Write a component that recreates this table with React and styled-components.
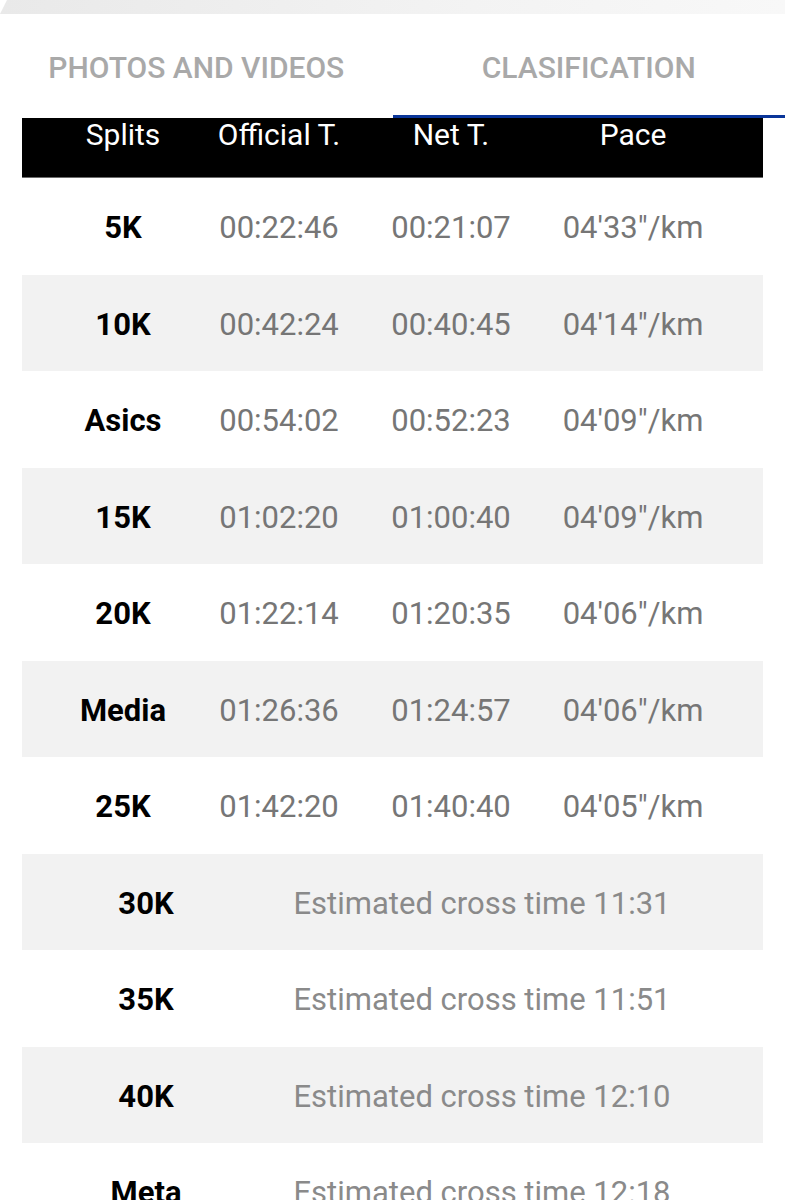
import React from 'react';
import styled, { createGlobalStyle } from 'styled-components';

const GlobalStyle = createGlobalStyle`
    body {
        margin: 0;
        background: #fff;
        font-family: Roboto, "Liberation Sans", sans-serif;
    }
`;

const Page = styled.div`
    width: 785px;
    height: 1200px;
    overflow: hidden;`
;

const TopStrip = styled.div`
    height: 14px;
    background: linear-gradient(90deg, #e9e9e9 0%, #f3f3f3 60%, #f8f8f8 100%);
    clip-path: polygon(7px 0, 100% 0, 100% 100%, 0 100%);`
;

const Tabs = styled.div`
    display: grid;
    grid-template-columns: 1fr 1fr;
    height: 104px;`
;

const Tab = styled.div`
    display: flex;
    align-items: center;
    justify-content: center;
    padding-top: 6px;
    font-size: 30px;
    font-weight: 500;
    text-transform: uppercase;
    color: #a9a9a9;
    border-bottom: 3px solid ${p => (p.active ? '#0a3599' : 'transparent')};`
;

const Table = styled.div`
    margin: 0 22px;`
;

const cols = '202px 110px 234px 130px 1fr';

const HeaderRow = styled.div`
    display: grid;
    grid-template-columns: ${cols};
    height: 59px;
    background: #000;
    border-bottom: 1px solid #6b6b6b;`
;

const HeaderCell = styled.div`
    display: flex;
    justify-content: center;
    white-space: nowrap;
    color: #fff;
    font-size: 30px;
    line-height: 34px;`
;

const Row = styled.div`
    display: grid;
    grid-template-columns: ${p => (p.estimated ? '248px 424px 1fr' : cols)};
    align-items: center;
    height: 96.5px;
    padding-top: 3px;
    box-sizing: border-box;
    background: ${p => (p.shaded ? '#f2f2f2' : '#fff')};`
;

const Cell = styled.div`
    display: flex;
    justify-content: center;
    white-space: nowrap;
    font-size: 31px;
    color: #767676;`
;

const Label = styled(Cell)`
    color: #000;
    font-weight: 700;`
;

const Estimate = styled(Cell)`
    color: #8a8a8a;`
;

const splits = [
    ['5K', '00:22:46', '00:21:07', '04\'33"/km'],
    ['10K', '00:42:24', '00:40:45', '04\'14"/km'],
    ['Asics', '00:54:02', '00:52:23', '04\'09"/km'],
    ['15K', '01:02:20', '01:00:40', '04\'09"/km'],
    ['20K', '01:22:14', '01:20:35', '04\'06"/km'],
    ['Media', '01:26:36', '01:24:57', '04\'06"/km'],
    ['25K', '01:42:20', '01:40:40', '04\'05"/km'],
];

const estimates = [
    ['30K', '11:31'],
    ['35K', '11:51'],
    ['40K', '12:10'],
    ['Meta', '12:18'],
];

const App = () => {
    return (
        <Page>
            <GlobalStyle />
            <TopStrip />
            <Tabs>
                <Tab>Photos and videos</Tab>
                <Tab active>Clasification</Tab>
            </Tabs>
            <Table>
                <HeaderRow>
                    <HeaderCell>Splits</HeaderCell>
                    <HeaderCell>Official T.</HeaderCell>
                    <HeaderCell>Net T.</HeaderCell>
                    <HeaderCell>Pace</HeaderCell>
                </HeaderRow>
                {splits.map(([name, official, net, pace], i) => (
                    <Row key={name} shaded={i % 2 === 1}>
                        <Label>{name}</Label>
                        <Cell>{official}</Cell>
                        <Cell>{net}</Cell>
                        <Cell>{pace}</Cell>
                    </Row>
                ))}
                {estimates.map(([name, time], i) => (
                    <Row key={name} estimated shaded={(splits.length + i) % 2 === 1}>
                        <Label>{name}</Label>
                        <Estimate>Estimated cross time {time}</Estimate>
                    </Row>
                ))}
            </Table>
        </Page>
    );
}

export default App;
